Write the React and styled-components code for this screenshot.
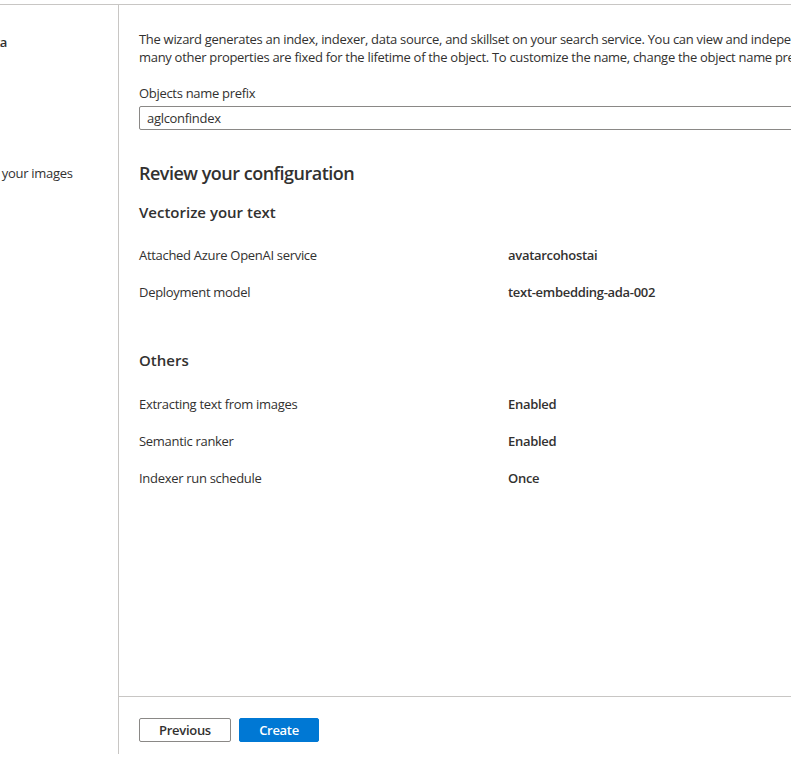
import styled, { createGlobalStyle } from 'styled-components'

const GlobalStyle = createGlobalStyle`
  html, body {
    margin: 0;
    padding: 0;
    background: #fff;
  }
  body {
    font-family: "Segoe UI", "Open Sans", "Noto Sans", sans-serif;
    font-size: 13px;
    letter-spacing: -0.3px;
    color: #323130;
    overflow: hidden;
  }
`

const color = {
  text: "#323130",
  border: "#c8c6c4",
  input: "#8a8886",
  primary: "#0078d4",
}

const Page = styled.div`
  width: 791px;
  height: 758px;
  padding-top: 4px;
  box-sizing: border-box;
  overflow: hidden;
`

const Frame = styled.div`
  display: flex;
  height: 749px;
  border-top: 1px solid ${color.border};
`

const Sidebar = styled.nav`
  width: 118px;
  flex-shrink: 0;
  border-right: 1px solid ${color.border};
  overflow: hidden;
`

const Steps = styled.ul`
  list-style: none;
  margin: 0 0 0 -119px;
  padding: 28px 0 0 0;
  width: 300px;
`

const Step = styled.li`
  height: 65.5px;
  line-height: 18px;
  white-space: nowrap;
  font-weight: ${props => props.active ? 600 : 400};
`

const Main = styled.main`
  flex: 1;
  display: flex;
  flex-direction: column;
  min-width: 0;
  overflow: hidden;
`

const Content = styled.div`
  flex: 1;
  padding: 25px 0 0 20px;
`

const Description = styled.p`
  margin: 0;
  line-height: 18px;

  & > span {
    display: block;
    white-space: nowrap;
  }
`

const Label = styled.label`
  display: block;
  margin-top: 18px;
  line-height: 18px;
`

const Input = styled.input`
  display: block;
  box-sizing: border-box;
  margin-top: 4px;
  width: 900px;
  height: 24px;
  padding: 0 7px;
  border: 1px solid ${color.input};
  border-radius: 2px;
  font: inherit;
  letter-spacing: inherit;
  color: ${color.text};
  background: #fff;

  &:focus {
    outline: 0;
  }
`

const Title = styled.h2`
  margin: 31px 0 0 0;
  font-size: 18px;
  line-height: 24px;
  font-weight: 600;
  letter-spacing: -0.5px;
`

const SectionTitle = styled.h3`
  margin: ${props => props.first ? "17px" : "49px"} 0 0 0;
  font-size: 15px;
  line-height: 20px;
  font-weight: 600;
  letter-spacing: 0;
`

const Summary = styled.dl`
  display: grid;
  grid-template-columns: 369px auto;
  row-gap: 19px;
  margin: ${props => props.top || "24px"} 0 0 0;
  line-height: 18px;
`

const Term = styled.dt`
  margin: 0;
`

const Value = styled.dd`
  margin: 0;
  font-weight: 600;
`

const Footer = styled.div`
  display: flex;
  gap: 8px;
  height: 58px;
  box-sizing: border-box;
  padding: 21px 0 0 20px;
  border-top: 1px solid ${color.border};
`

const Button = styled.button`
  height: 24px;
  min-width: ${props => props.primary ? "80px" : "92px"};
  padding: 0 16px;
  border: 1px solid ${props => props.primary ? color.primary : color.input};
  border-radius: 2px;
  background: ${props => props.primary ? color.primary : "#fff"};
  color: ${props => props.primary ? "#fff" : color.text};
  font: inherit;
  font-weight: 600;
  letter-spacing: inherit;
  line-height: 22px;
  cursor: pointer;
`

const steps = [
  { name: "Connect to your data", active: true },
  { name: "Vectorize your text" },
  { name: "Vectorize and enrich your images" },
  { name: "Advanced settings" },
  { name: "Review and create" },
]

const vectorize = [
  ["Attached Azure OpenAI service", "avatarcohostai"],
  ["Deployment model", "text-embedding-ada-002"],
]

const others = [
  ["Extracting text from images", "Enabled"],
  ["Semantic ranker", "Enabled"],
  ["Indexer run schedule", "Once"],
]

const Rows = ({ items, ...rest }) => (
  <Summary {...rest}>
    {items.map(([term, value]) => [
      <Term key={term}>{term}</Term>,
      <Value key={term + "-v"}>{value}</Value>,
    ])}
  </Summary>
)

export default function App() {
  return (
    <Page>
      <GlobalStyle />
      <Frame>
        <Sidebar>
          <Steps>
            {steps.map(s => (
              <Step key={s.name} active={s.active}>{s.name}</Step>
            ))}
          </Steps>
        </Sidebar>
        <Main>
          <Content>
            <Description>
              <span>The wizard generates an index, indexer, data source, and skillset on your search service. You can view and independently edit these objects later, but</span>
              <span>many other properties are fixed for the lifetime of the object. To customize the name, change the object name prefix.</span>
            </Description>
            <Label htmlFor="prefix">Objects name prefix</Label>
            <Input id="prefix" defaultValue="aglconfindex" />
            <Title>Review your configuration</Title>
            <SectionTitle first>Vectorize your text</SectionTitle>
            <Rows items={vectorize} />
            <SectionTitle>Others</SectionTitle>
            <Rows items={others} top="25px" />
          </Content>
          <Footer>
            <Button>Previous</Button>
            <Button primary>Create</Button>
          </Footer>
        </Main>
      </Frame>
    </Page>
  )
}
